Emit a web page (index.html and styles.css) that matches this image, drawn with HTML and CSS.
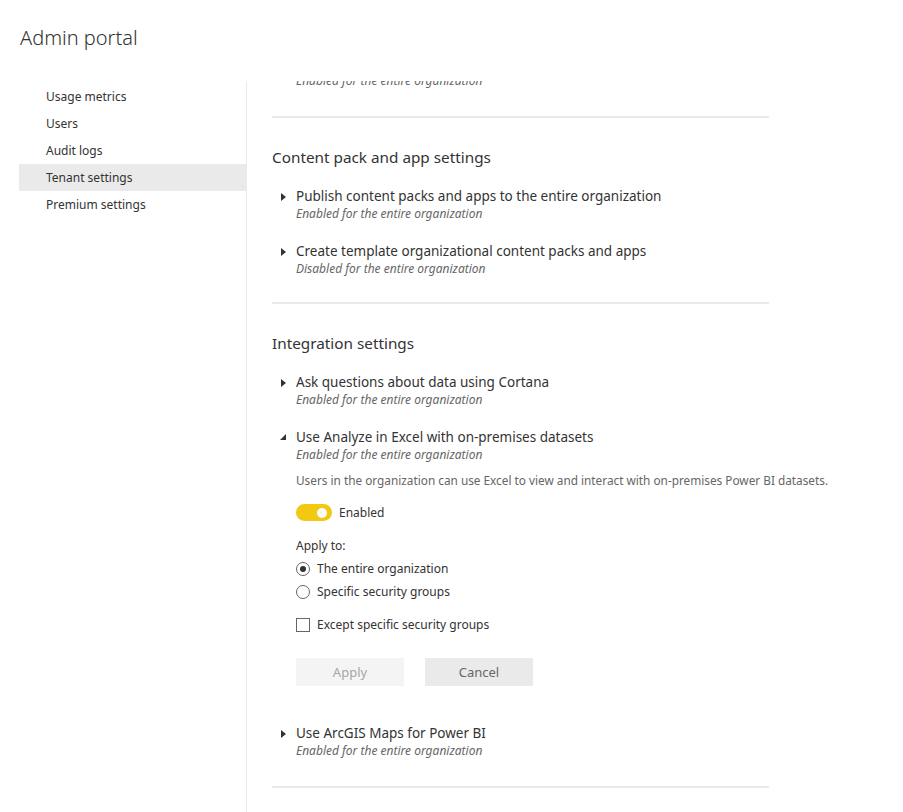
FILE: index.html
```html
<!DOCTYPE html>
<html lang="en">
<head>
    <meta charset="UTF-8">
    <title>Admin portal</title>
    <link rel="stylesheet" href="styles.css">
</head>
<body>

<h1 class="page-title">Admin portal</h1>

<div class="layout">
    <nav class="side-nav">
        <a class="nav-item">Usage metrics</a>
        <a class="nav-item">Users</a>
        <a class="nav-item">Audit logs</a>
        <a class="nav-item selected">Tenant settings</a>
        <a class="nav-item">Premium settings</a>
    </nav>

    <main class="content">
        <div class="scroller">
            <div class="setting clipped">
                <div class="setting-text">
                    <div class="setting-status">Enabled for the entire organization</div>
                </div>
            </div>
            <hr class="divider">

            <section class="group">
                <h2 class="group-title">Content pack and app settings</h2>

                <div class="setting">
                    <span class="caret"></span>
                    <div class="setting-text">
                        <div class="setting-name">Publish content packs and apps to the entire organization</div>
                        <div class="setting-status">Enabled for the entire organization</div>
                    </div>
                </div>

                <div class="setting">
                    <span class="caret"></span>
                    <div class="setting-text">
                        <div class="setting-name">Create template organizational content packs and apps</div>
                        <div class="setting-status">Disabled for the entire organization</div>
                    </div>
                </div>
            </section>
            <hr class="divider">

            <section class="group last">
                <h2 class="group-title">Integration settings</h2>

                <div class="setting">
                    <span class="caret"></span>
                    <div class="setting-text">
                        <div class="setting-name">Ask questions about data using Cortana</div>
                        <div class="setting-status">Enabled for the entire organization</div>
                    </div>
                </div>

                <div class="setting expanded">
                    <span class="caret open"></span>
                    <div class="setting-text">
                        <div class="setting-name">Use Analyze in Excel with on-premises datasets</div>
                        <div class="setting-status">Enabled for the entire organization</div>

                        <p class="setting-desc">Users in the organization can use Excel to view and interact with on-premises Power BI datasets.</p>

                        <div class="toggle-row">
                            <span class="toggle"><span class="knob"></span></span>
                            <span>Enabled</span>
                        </div>

                        <div class="apply-label">Apply to:</div>
                        <label class="choice"><span class="radio checked"></span>The entire organization</label>
                        <label class="choice"><span class="radio"></span>Specific security groups</label>
                        <label class="choice except"><span class="checkbox"></span>Except specific security groups</label>

                        <div class="buttons">
                            <button class="btn disabled">Apply</button>
                            <button class="btn">Cancel</button>
                        </div>
                    </div>
                </div>

                <div class="setting">
                    <span class="caret"></span>
                    <div class="setting-text">
                        <div class="setting-name">Use ArcGIS Maps for Power BI</div>
                        <div class="setting-status">Enabled for the entire organization</div>
                    </div>
                </div>
            </section>
            <hr class="divider">
        </div>
    </main>
</div>

</body>
</html>
```

FILE: styles.css
```css
html, body {
    height: 100%;
}
body {
    font-family: 'Noto Sans', 'Open Sans', sans-serif;
    margin: 0;
    background-color: #FFFFFF;
    color: #333;
    display: flex;
    flex-direction: column;
    overflow: hidden;
}
.page-title {
    font-size: 20px;
    font-weight: 300;
    color: #333;
    margin: 0;
    padding: 25px 0 0 20px;
    height: 81px;
    box-sizing: border-box;
    line-height: 26px;
    flex-shrink: 0;
}
.layout {
    display: flex;
    flex: 1;
    min-height: 0;
}
.side-nav {
    width: 227px;
    margin-left: 19px;
    border-right: 1px solid #EAEAEA;
    display: flex;
    flex-direction: column;
    padding-top: 2px;
}
.nav-item {
    display: block;
    font-size: 12px;
    line-height: 27px;
    padding-left: 27px;
    color: #333;
    cursor: pointer;
}
.nav-item.selected {
    background-color: #EAEAEA;
}
.content {
    flex: 1;
    overflow: hidden;
    padding-left: 25px;
}
.scroller {
    width: 497px;
    margin-top: -9px;
}
.divider {
    border: none;
    border-top: 2px solid #EAEAEA;
    margin: 0;
}
.setting.clipped {
    margin-bottom: 0;
    padding-left: 24px;
    padding-bottom: 27px;
}
.group {
    padding: 28px 0 25px;
}
.group.last {
    padding-bottom: 27px;
}
.group-title {
    font-size: 15.3px;
    font-weight: 400;
    margin: 0 0 19px;
    line-height: 22px;
}
.setting {
    display: flex;
    padding-left: 8px;
    margin-bottom: 20px;
}
.setting.expanded {
    margin-bottom: 38px;
}
.group .setting:last-child {
    margin-bottom: 0;
}
.caret {
    width: 0;
    height: 0;
    border-top: 4px solid transparent;
    border-bottom: 4px solid transparent;
    border-left: 5px solid #333;
    margin: 6px 10px 0 1px;
    flex-shrink: 0;
}
.caret.open {
    border: none;
    border-bottom: 6px solid #333;
    border-left: 6px solid transparent;
    margin: 6px 10px 0 0;
}
.setting-text {
    flex: 1;
}
.setting-name {
    font-size: 13.5px;
    line-height: 18px;
}
.setting-status {
    font-size: 12px;
    font-style: italic;
    color: #666;
    line-height: 17px;
}
.setting-desc {
    font-size: 11.8px;
    color: #666;
    margin: 9px 0 0;
    line-height: 17px;
    white-space: nowrap;
}
.toggle-row {
    display: flex;
    align-items: center;
    gap: 7px;
    font-size: 12px;
    margin-top: 15px;
}
.toggle {
    width: 36px;
    height: 17px;
    border-radius: 9px;
    background-color: #F2C811;
    position: relative;
}
.knob {
    position: absolute;
    right: 5px;
    top: 3.5px;
    width: 10px;
    height: 10px;
    border-radius: 50%;
    background-color: #FFFFFF;
}
.apply-label {
    font-size: 12px;
    margin-top: 16px;
    line-height: 17px;
}
.choice {
    display: flex;
    align-items: center;
    gap: 7px;
    font-size: 12px;
    margin-top: 6px;
    line-height: 17px;
}
.choice.except {
    margin-top: 16px;
}
.radio {
    width: 12px;
    height: 12px;
    border: 1px solid #666;
    border-radius: 50%;
    position: relative;
}
.radio.checked::after {
    content: "";
    position: absolute;
    left: 3px;
    top: 3px;
    width: 6px;
    height: 6px;
    border-radius: 50%;
    background-color: #333;
}
.checkbox {
    width: 12px;
    height: 12px;
    border: 1px solid #666;
}
.buttons {
    display: flex;
    gap: 21px;
    margin-top: 25px;
}
.btn {
    width: 108px;
    height: 28px;
    border: none;
    background-color: #EAEAEA;
    color: #666;
    font-family: inherit;
    font-size: 13px;
    cursor: pointer;
}
.btn.disabled {
    background-color: #F4F4F4;
    color: #A6A6A6;
}
```
